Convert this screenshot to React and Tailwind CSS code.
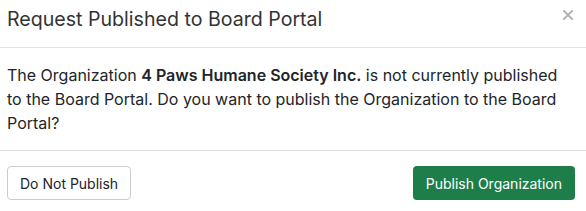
export default function App() {
  return (
    <div
      className="w-[586px] h-[211px] overflow-hidden bg-white text-[#212529]"
      style={{ fontFamily: 'Inter, "Liberation Sans", sans-serif' }}
    >
      {/* Header */}
      <div className="flex items-start justify-between h-12 pl-[7px] pr-[13px] pt-[7px] border-b border-[#e3e3e3]">
        <h2 className="text-[19.6px] leading-[24px] font-normal text-[#333]">Request Published to Board Portal</h2>
        <button className="mt-[3px] text-[#b5b5b5]" aria-label="Close">
          <svg width="10" height="10" viewBox="0 0 10 10">
            <path d="M1 1L9 9M9 1L1 9" stroke="currentColor" strokeWidth="2" strokeLinecap="square" />
          </svg>
        </button>
      </div>

      {/* Body */}
      <div className="h-[103px] pl-[7px] pr-[20px] pt-[15px] border-b border-[#e3e3e3]">
        <p className="text-[16px] leading-[24px] text-[#212529]">
          The Organization <span className="font-semibold">4 Paws Humane Society Inc.</span> is not currently published
          to the Board Portal. Do you want to publish the Organization to the Board Portal?
        </p>
      </div>

      {/* Footer */}
      <div className="flex items-center justify-between pl-[7px] pr-[11px] pt-[15px]">
        <button className="h-[34px] px-[12px] rounded-[4px] border border-[#ccc] bg-white text-[14px] text-[#212529]">
          Do Not Publish
        </button>
        <button className="h-[34px] px-[13px] rounded-[4px] bg-[#1e7e4a] text-[14px] text-white">
          Publish Organization
        </button>
      </div>
    </div>
  )
}
